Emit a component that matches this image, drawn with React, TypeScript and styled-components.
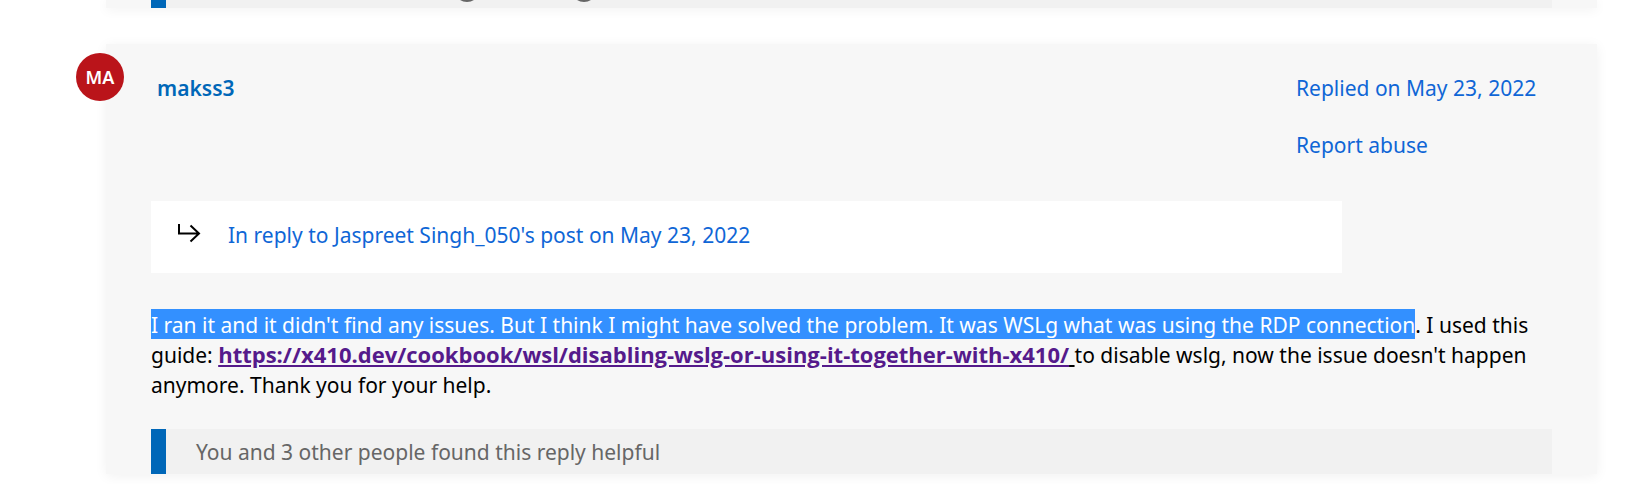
import React from "react";
import styled, { createGlobalStyle } from "styled-components";

const Global = createGlobalStyle`
  *, *::before, *::after { box-sizing: border-box; }
  body {
    margin: 0;
    background: #fff;
    color: #000;
    font-family: "Noto Sans", "Segoe UI", sans-serif;
    font-size: 21px;
    line-height: 30px;
    overflow-x: hidden;
  }
`;

const Thread = styled.main`
  display: flex;
  flex-direction: column;
  gap: 36px;
  padding: 0 47px 10px 106px;
`;

const Card = styled.article`
  position: relative;
  padding: 25px 45px 0;
  background: #f7f7f7;
  box-shadow: 0 2px 12px rgba(0, 0, 0, 0.06);
`;

const PreviousCard = styled(Card)`
  padding-top: 0;
`;

const Avatar = styled.span`
  position: absolute;
  top: 9px;
  left: -30px;
  width: 48px;
  height: 48px;
  border-radius: 50%;
  display: grid;
  place-items: center;
  background: #ba141a;
  color: #fff;
  font-size: 18px;
  font-weight: 600;
`;

const Header = styled.header`
  display: flex;
  justify-content: space-between;
  align-items: flex-start;
  padding: 4px 11px 0 6px;
`;

const Author = styled.a`
  color: #0067b8;
  font-weight: 600;
  text-decoration: none;
`;

const Meta = styled.div`
  display: flex;
  flex-direction: column;
  gap: 27px;
  width: 245px;
`;

const PlainLink = styled.a`
  color: #0f66d6;
  text-decoration: none;
  white-space: nowrap;
`;

const InReply = styled.div`
  display: flex;
  align-items: center;
  gap: 27px;
  width: 85%;
  margin-top: 41px;
  padding: 19px 26px 23px;
  background: #fff;
`;

const ReplyArrow = styled.svg`
  flex: none;
  margin-bottom: 4px;
`;

const Body = styled.p`
  margin: 37px 0 29px;
`;

const Highlight = styled.mark`
  padding: 2px 0 0;
  background: #3390ff;
  color: #fff;
`;

const VisitedLink = styled.a`
  color: #551a8b;
  font-family: "Open Sans", "Segoe UI", sans-serif;
  font-size: 22px;
  font-weight: 700;
  line-height: 20px;
`;

const Helpful = styled.div`
  border-left: 15px solid #0067b8;
  background: #f1f1f1;
  color: #666;
  padding: 8px 30px 7px;
`;

const RatingRow = styled(Helpful)`
  display: flex;
  align-items: flex-end;
  gap: 91px;
  height: 8px;
  padding: 0 0 6px 288px;
  overflow: hidden;
`;

const Ring = styled.svg`
  flex: none;
`;

const RatingRing = () => (
  <Ring width="26" height="26" viewBox="0 0 26 26" fill="none" stroke="#666" strokeWidth="2" aria-hidden="true">
    <circle cx="13" cy="13" r="12" />
  </Ring>
);

export default function App() {
  return (
    <>
      <Global />
      <Thread>
        <PreviousCard>
          <RatingRow>
            <RatingRing />
            <RatingRing />
          </RatingRow>
        </PreviousCard>
        <Card>
          <Avatar>MA</Avatar>
          <Header>
            <Author href="#makss3">makss3</Author>
            <Meta>
              <PlainLink href="#reply">Replied on May 23, 2022</PlainLink>
              <PlainLink href="#report">Report abuse</PlainLink>
            </Meta>
          </Header>
          <InReply>
            <ReplyArrow width="24" height="20" viewBox="0 0 24 20" fill="none" stroke="#000" strokeWidth="2" aria-hidden="true">
              <path d="M2 1V10.500H22M13.500 2.500L22 10.500L13.500 18.500" />
            </ReplyArrow>
            <PlainLink href="#parent">In reply to Jaspreet Singh_050's post on May 23, 2022</PlainLink>
          </InReply>
          <Body>
            <Highlight>
              I ran it and it didn't find any issues. But I think I might have solved the problem. It was WSLg what was using the RDP connection
            </Highlight>
            . I used this guide:{" "}
            <VisitedLink href="https://x410.dev/cookbook/wsl/disabling-wslg-or-using-it-together-with-x410/">
              https://x410.dev/cookbook/wsl/disabling-wslg-or-using-it-together-with-x410/
            </VisitedLink>
            <u> </u>
            to disable wslg, now the issue doesn't happen anymore. Thank you for your help.
          </Body>
          <Helpful>You and 3 other people found this reply helpful</Helpful>
        </Card>
      </Thread>
    </>
  );
}
